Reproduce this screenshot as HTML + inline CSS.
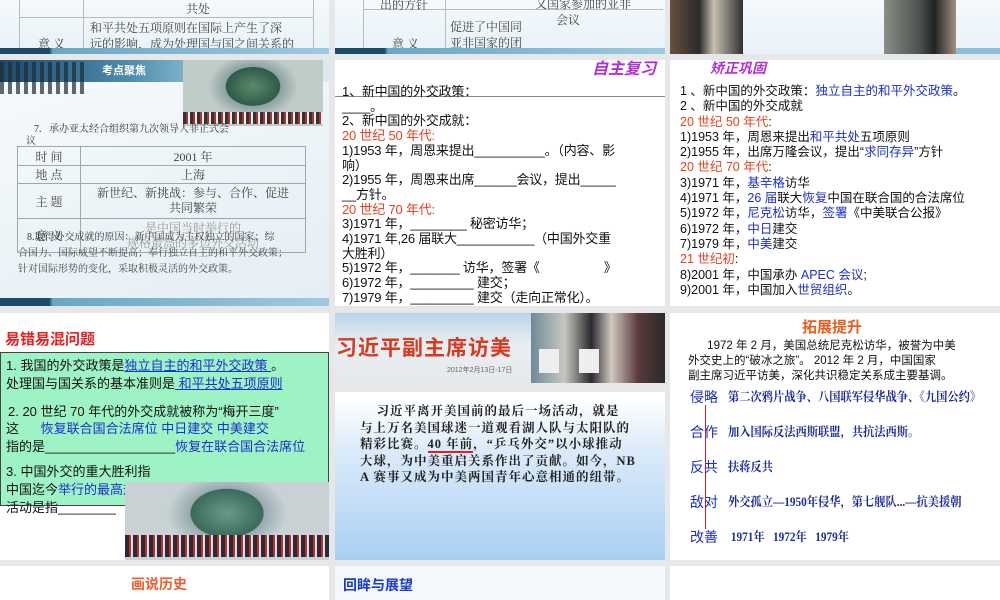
<!DOCTYPE html>
<html><head><meta charset="utf-8">
<style>
*{margin:0;padding:0;box-sizing:border-box}
body{width:1000px;height:600px;background:#e6e7e9;position:relative;overflow:hidden;font-family:"Liberation Sans","Noto Sans CJK SC",sans-serif;color:#111}
.s{position:absolute;overflow:hidden;background:#fff}
.a{position:absolute;white-space:nowrap}
.serif{font-family:"Liberation Serif","Noto Serif CJK SC",serif}
.r{color:#e8401c}.b{color:#1b2fd0}
table{border-collapse:collapse}
td{border:1px solid #9aa;text-align:center;font-family:"Liberation Serif","Noto Serif CJK SC",serif;font-size:12px;color:#444}
</style></head><body>

<!-- Row 1 -->
<div class="s" style="left:0;top:0;width:329px;height:54px;background:linear-gradient(#f4f9fc,#e8f2f8)">
 <div class="a" style="left:19px;top:-2px;width:295px;height:52px;border-left:1px solid #bbb;border-right:1px solid #bbb"></div>
 <div class="a" style="left:83px;top:0;width:1px;height:50px;background:#bbb"></div>
 <div class="a" style="left:19px;top:17px;width:295px;height:1px;background:#bbb"></div>
 <div class="a serif" style="left:186px;top:0;font-size:12px;color:#444">共处</div>
 <div class="a serif" style="left:38px;top:35px;font-size:12px;color:#444">意 义</div>
 <div class="a serif" style="left:90px;top:20px;font-size:12px;color:#444;line-height:16px">和平共处五项原则在国际上产生了深<br>远的影响，成为处理国与国之间关系的</div>
 <div class="a" style="left:0;top:48px;width:329px;height:6px;background:linear-gradient(90deg,#1e4a6a 15%,#6aa6c4 16%,#9ccbe0)"></div>
</div>
<div class="s" style="left:335px;top:0;width:330px;height:54px;background:linear-gradient(#f4f9fc,#e8f2f8)">
 <div class="a" style="left:28px;top:-2px;width:250px;height:52px;border-left:1px solid #bbb"></div>
 <div class="a" style="left:110px;top:0;width:1px;height:50px;background:#bbb"></div>
 <div class="a" style="left:28px;top:9px;width:300px;height:1px;background:#bbb"></div>
 <div class="a serif" style="left:45px;top:-4px;font-size:12px;color:#444">出的方针</div>
 <div class="a serif" style="left:57px;top:35px;font-size:12px;color:#444">意 义</div>
 <div class="a serif" style="left:115px;top:19px;font-size:12px;color:#444;line-height:16px">促进了中国同<br>亚非国家的团</div>
 <div class="a serif" style="left:200px;top:-4px;font-size:12px;color:#444;line-height:16px">又国家参加的亚非<br>&nbsp;&nbsp;&nbsp;&nbsp;&nbsp;&nbsp;&nbsp;会议</div>
 <div class="a" style="left:0;top:48px;width:330px;height:6px;background:linear-gradient(90deg,#1e4a6a 15%,#6aa6c4 16%,#9ccbe0)"></div>
</div>
<div class="s" style="left:670px;top:0;width:330px;height:54px;background:linear-gradient(#f4f9fc,#e8f2f8)">
 <div class="a" style="left:0;top:0;width:73px;height:54px;background:linear-gradient(90deg,#6a5040,#2a2a2a 40%,#c8c0b0 60%,#303030)"></div>
 <div class="a" style="left:214px;top:0;width:72px;height:54px;background:linear-gradient(90deg,#8a8e86,#4c5050 50%,#222 70%,#a09080)"></div>
 <div class="a" style="left:286px;top:48px;width:44px;height:6px;background:#8ec0d8"></div>
</div>

<!-- Row 2 -->
<div class="s" style="left:0;top:60px;width:329px;height:246px;background:linear-gradient(160deg,#f6fafc,#e4eef4)">
 <div class="a" style="left:0;top:0;width:329px;height:22px;background:linear-gradient(90deg,#1f4a68,#4f8eb0 40%,#a8cde0 70%,#dceaf2)"></div>
 <div class="a" style="left:0;top:2px;width:88px;height:32px;background:repeating-linear-gradient(90deg,#1c2b38 0 4px,transparent 4px 8px);opacity:.7"></div>
 <div class="a" style="left:102px;top:2px;font-size:11px;font-weight:bold;color:#fff">考点聚焦</div>
 <div class="a" style="left:183px;top:0;width:140px;height:66px;background:radial-gradient(ellipse 45px 32px at 50% 40%,#5a8a6a,#2e5a4a 60%,#8aa0a0 61%,#c0ccc8)"></div>
 <div class="a" style="left:183px;top:52px;width:140px;height:12px;background:repeating-linear-gradient(90deg,#333 0 3px,#a33 3px 5px,#eee 5px 7px)"></div>
 <div class="a serif" style="left:34px;top:60px;font-size:10px;color:#333">7.&nbsp;&nbsp; 承办亚太经合组织第九次领导人非正式会</div>
 <div class="a serif" style="left:26px;top:72px;font-size:10px;color:#333">议</div>
 <table class="a" style="left:17px;top:86px;width:289px">
  <tr style="height:19px"><td style="width:63px">时 间</td><td>2001 年</td></tr>
  <tr style="height:18px"><td>地 点</td><td>上海</td></tr>
  <tr style="height:35px"><td>主 题</td><td style="line-height:15px">新世纪、新挑战：参与、合作、促进<br>共同繁荣</td></tr>
  <tr style="height:34px"><td>意 义</td><td style="line-height:15px;color:#999">是中国当时举行的<br>规格最高的多边外交活动</td></tr>
 </table>
 <div class="a serif" style="left:27px;top:170px;font-size:10px;color:#333;line-height:16px">8.取得外交成就的原因：新中国成为主权独立的国家；综</div>
 <div class="a serif" style="left:18px;top:186px;font-size:10px;color:#444;line-height:16px">合国力、国际威望不断提高；奉行独立自主的和平外交政策；<br>针对国际形势的变化，采取积极灵活的外交政策。</div>
 <div class="a" style="left:0;top:238px;width:329px;height:8px;background:linear-gradient(90deg,#1e4a6a 15%,#6aa6c4 16%,#9ccbe0)"></div>
</div>

<div class="s" style="left:335px;top:60px;width:330px;height:246px;font-size:13px;line-height:14.7px">
 <div class="a" style="left:257px;top:3px;font-size:16px;font-weight:bold;font-style:italic;color:#b030d8">自主复习</div>
 <div class="a" style="left:0;top:36px;width:330px;height:1px;background:#888"></div>
 <div class="a" style="left:7px;top:25px;letter-spacing:-0.2px">1、新中国的外交政策：<br>____。<br>2、新中国的外交成就：<br><span class="r">20 世纪 50 年代:</span><br>1)1953 年，周恩来提出__________。（内容、影<br>响）<br>2)1955 年，周恩来出席______会议，提出_____<br>__方针。<br><span class="r">20 世纪 70 年代:</span><br>3)1971 年，________ 秘密访华；<br>4)1971 年,26 届联大___________（中国外交重<br>大胜利）<br>5)1972 年，_______ 访华，签署《　　　　　》<br>6)1972 年，_________ 建交；<br>7)1979 年，_________ 建交（走向正常化）。</div>
</div>

<div class="s" style="left:670px;top:60px;width:330px;height:246px;font-size:12.5px;line-height:15.3px">
 <div class="a" style="left:40px;top:1px;font-size:14px;font-weight:bold;font-style:italic;color:#b030d8">矫正巩固</div>
 <div class="a" style="left:10px;top:24px">1 、新中国的外交政策：<span class="b">独立自主的和平外交政策</span>。<br>2 、新中国的外交成就<br><span class="r">20 世纪 50 年代</span>:<br>1)1953 年，周恩来提出<span class="b">和平共处</span>五项原则<br>2)1955 年，出席万隆会议，提出“<span class="b">求同存异</span>”方针<br><span class="r">20 世纪 70 年代</span>:<br>3)1971 年，<span class="b">基辛格</span>访华<br>4)1971 年，<span class="b">26 届</span>联大<span class="b">恢复</span>中国在联合国的合法席位<br>5)1972 年，<span class="b">尼克松</span>访华，<span class="b">签署</span>《中美联合公报》<br>6)1972 年，<span class="b">中日</span>建交<br>7)1979 年，<span class="b">中美</span>建交<br><span class="r">21 世纪初</span>:<br>8)2001 年，中国承办 <span class="b">APEC 会议</span>;<br>9)2001 年，中国加入<span class="b">世贸组织</span>。</div>
</div>

<!-- Row 3 -->
<div class="s" style="left:0;top:313px;width:329px;height:247px">
 <div class="a" style="left:5px;top:15px;font-size:15px;font-weight:bold;color:#e82020">易错易混问题</div>
 <div class="a" style="left:0;top:39px;width:329px;height:154px;background:#9ef3c4;border:1px solid #444"></div>
 <div class="a" style="left:6px;top:44px;font-size:13px;line-height:17.5px">1. 我国的外交政策是<span class="b" style="text-decoration:underline">独立自主的和平外交政策 </span>。<br>处理国与国关系的基本准则是<span class="b" style="text-decoration:underline"> 和平共处五项原则</span></div>
 <div class="a" style="left:8px;top:90px;font-size:13px;line-height:17.5px">2. 20 世纪 70 年代的外交成就被称为“梅开三度”</div>
 <div class="a" style="left:6px;top:107px;font-size:13px;line-height:17.5px">这&nbsp;&nbsp;&nbsp;&nbsp;&nbsp;&nbsp;<span class="b">恢复联合国合法席位  中日建交  中美建交</span><br>指的是__________________<span class="b">恢复在联合国合法席位</span></div>
 <div class="a" style="left:6px;top:150px;font-size:13px;line-height:18px">3. 中国外交的重大胜利指<br>中国迄今<span class="b">举行的最高规格</span><br>活动是指________</div>
 <div class="a" style="left:125px;top:169px;width:204px;height:78px;background:radial-gradient(ellipse 60px 40px at 50% 40%,#6a9a8a,#3a6a5a 60%,#9aaab0 62%,#c8d2d4)"></div>
 <div class="a" style="left:125px;top:222px;width:204px;height:22px;background:repeating-linear-gradient(90deg,#2a2a3a 0 4px,#b83030 4px 6px,#e8e0d8 6px 8px)"></div>
</div>

<div class="s" style="left:335px;top:313px;width:330px;height:247px;background:linear-gradient(#fff 35%,#dcebfa 55%,#a8d0f4)">
 <div class="a" style="left:0;top:0;width:330px;height:79px;background:linear-gradient(#b8d4ea,#eaeef2 40%,#e6e8ea)"></div>
 <div class="a" style="left:1px;top:19px;font-size:21px;font-weight:bold;color:#d83a20;letter-spacing:1px">习近平副主席访美</div>
 <div class="a" style="left:112px;top:52px;font-size:7px;color:#666">2012年2月13日-17日</div>
 <div class="a" style="left:196px;top:0;width:134px;height:70px;background:linear-gradient(90deg,#6e8a98,#c8c8c0 25%,#2a2a30 45%,#d0c8c0 60%,#5a3a3a 80%,#2a2a2a)"></div>
 <div class="a" style="left:204px;top:36px;width:20px;height:24px;background:#eee"></div>
 <div class="a" style="left:244px;top:36px;width:20px;height:24px;background:#eee"></div>
 <div class="a serif" style="left:25px;top:90px;font-size:12.5px;line-height:16.5px;font-weight:bold;color:#222;letter-spacing:1px">&nbsp;&nbsp;&nbsp;&nbsp;习近平离开美国前的最后一场活动，就是<br>与上万名美国球迷一道观看湖人队与太阳队的<br>精彩比赛。<span style="border-bottom:2px solid #e02020">40 年前</span>，“乒乓外交”以小球推动<br>大球，为中美重启关系作出了贡献。如今，NB<br>A 赛事又成为中美两国青年心意相通的纽带。</div>
</div>

<div class="s" style="left:670px;top:313px;width:330px;height:247px">
 <div class="a" style="left:132px;top:3px;font-size:15px;font-weight:bold;color:#f05a1a">拓展提升</div>
 <div class="a" style="left:18px;top:26px;font-size:11.5px;line-height:15px">&nbsp;&nbsp;&nbsp;&nbsp;&nbsp;&nbsp;1972 年 2 月，美国总统尼克松访华，被誉为中美<br>外交史上的“破冰之旅”。 2012 年 2 月，中国国家<br>副主席习近平访美，深化共识稳定关系成主要基调。</div>
 <div class="a b" style="left:20px;top:67px;font-size:14px;line-height:35px">侵略<br>合作<br>反共<br>敌对<br>改善</div>
 <div class="a" style="left:35px;top:92px;width:1px;height:124px;background:#c02020"></div>
 <div class="a serif" style="left:58px;top:67px;font-size:12.5px;font-weight:bold;line-height:35px;color:#1a2aa0;transform:scaleX(.9);transform-origin:left">第二次鸦片战争、八国联军侵华战争、《九国公约》<br>加入国际反法西斯联盟，共抗法西斯。<br>扶蒋反共<br>外交孤立—1950年侵华，第七舰队...—抗美援朝<br>&nbsp;1971年&nbsp;&nbsp;&nbsp;1972年&nbsp;&nbsp;&nbsp;1979年</div>
</div>

<!-- Row 4 -->
<div class="s" style="left:0;top:566px;width:329px;height:34px">
 <div class="a" style="left:131px;top:8px;font-size:14px;font-weight:bold;color:#f06030">画说历史</div>
</div>
<div class="s" style="left:335px;top:566px;width:330px;height:34px;background:#f4f8fc">
 <div class="a" style="left:8px;top:9px;font-size:14px;font-weight:bold;color:#1a3ac8">回眸与展望</div>
</div>
<div class="s" style="left:670px;top:566px;width:330px;height:34px"></div>
</body></html>
